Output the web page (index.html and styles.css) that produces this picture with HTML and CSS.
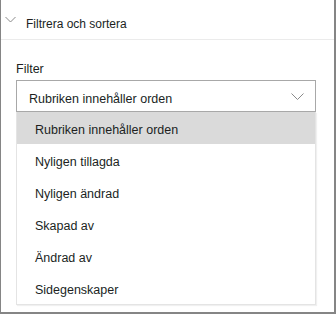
FILE: index.html
```html
<!DOCTYPE html>
<html lang="sv">
<head>
    <meta charset="UTF-8">
    <title>Filtrera och sortera</title>
    <link rel="stylesheet" href="styles.css">
</head>
<body>
<div class="panel">
    <!--rubrik-->
    <div class="head">
        <svg class="head-arrow" width="11" height="7" viewBox="0 0 11 7">
            <path d="M0.5 1 L5.5 6 L10.5 1" fill="none" stroke="#8a8a8a" stroke-width="1"/>
        </svg>
        <span class="head-title">Filtrera och sortera</span>
    </div>

    <div class="body">
        <p class="label">Filter</p>

        <!--rullgardin-->
        <div class="select">
            <span class="select-text">Rubriken innehåller orden</span>
            <svg class="select-arrow" width="13" height="7" viewBox="0 0 13 7">
                <path d="M0.5 0.5 L6.5 6.5 L12.5 0.5" fill="none" stroke="#8a8a8a" stroke-width="1"/>
            </svg>
        </div>

        <!--lista-->
        <ul class="options">
            <li class="on">Rubriken innehåller orden</li>
            <li>Nyligen tillagda</li>
            <li>Nyligen ändrad</li>
            <li>Skapad av</li>
            <li>Ändrad av</li>
            <li>Sidegenskaper</li>
        </ul>
    </div>
</div>
</body>
</html>
```

FILE: styles.css
```css
*{
    margin: 0;
    padding: 0;
    list-style: none;
    box-sizing: border-box;
}
body{
    width: 336px;
    height: 314px;
    background: #fff;
    font-family: "Liberation Sans", Arial, sans-serif;
    color: #201f1e;
}
.panel{
    height: 314px;
    border-left: 1px solid #858585;
    border-right: 2px solid #858585;
    border-bottom: 2px solid #858585;
}

.head{
    height: 40px;
    display: flex;
    align-items: flex-start;
    padding: 16px 0 0 4px;
    border-bottom: 1px solid #ebebeb;
}
.head-arrow{
    margin-right: 10px;
}
.head-title{
    font-size: 12px;
    line-height: 16px;
}

.body{
    padding: 21px 0 0 15px;
}
.label{
    font-size: 12.5px;
    line-height: 16px;
    margin-bottom: 3px;
}

.select{
    width: 300px;
    height: 32px;
    border: 1px solid #a8a8a8;
    display: flex;
    align-items: center;
    justify-content: space-between;
    padding: 0 11px 0 12px;
}
.select-text{
    font-size: 12.5px;
    line-height: 16px;
    margin-top: 5px;
}

.options{
    width: 300px;
    border: 1px solid #e4e4e4;
    border-top: none;
    box-shadow: 1px 1px 1px rgba(0,0,0,.06);
}
.options li{
    height: 32px;
    padding: 10px 18px 6px;
    font-size: 12.5px;
    line-height: 16px;
}
.options .on{
    background-color: #dadada;
}
```
